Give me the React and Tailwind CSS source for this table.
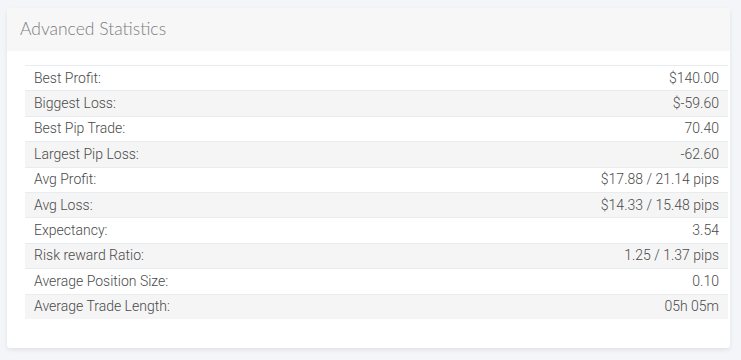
const stats = [
  ["Best Profit:", "$140.00"],
  ["Biggest Loss:", "$-59.60"],
  ["Best Pip Trade:", "70.40"],
  ["Largest Pip Loss:", "-62.60"],
  ["Avg Profit:", "$17.88 / 21.14 pips"],
  ["Avg Loss:", "$14.33 / 15.48 pips"],
  ["Expectancy:", "3.54"],
  ["Risk reward Ratio:", "1.25 / 1.37 pips"],
  ["Average Position Size:", "0.10"],
  ["Average Trade Length:", "05h 05m"],
];

export default function App() {
  return (
    <div className="w-[741px] h-[360px] bg-[#f3f5f9] pt-[8px] pl-[7px] pr-[11px]">
      <div className="bg-white rounded-[3px] shadow-[0_2px_4px_rgba(0,0,0,0.08)] h-[340px]">
        <div className="h-[43px] bg-[#f7f7f7] rounded-t-[3px] flex items-center pl-[13px]">
          <h3
            className="text-[17.5px] font-light text-[#7a7d82]"
            style={{ fontFamily: "Lato, 'Open Sans', sans-serif" }}
          >
            Advanced Statistics
          </h3>
        </div>
        <div className="pl-[18px] pr-[2px] pt-[14px]">
          <div
            className="text-[14px] text-[#4a4a4a] font-light"
            style={{ fontFamily: "Roboto, 'Liberation Sans', sans-serif" }}
          >
            {stats.map(([label, value], i) => (
              <div
                key={label}
                className={`h-[25.4px] border-t border-[#e9ecef] flex items-center justify-between px-[9px] ${
                  i % 2 === 1 ? "bg-[#f5f5f5]" : "bg-white"
                }`}
              >
                <span>{label}</span>
                <span>{value}</span>
              </div>
            ))}
          </div>
        </div>
      </div>
    </div>
  );
}
